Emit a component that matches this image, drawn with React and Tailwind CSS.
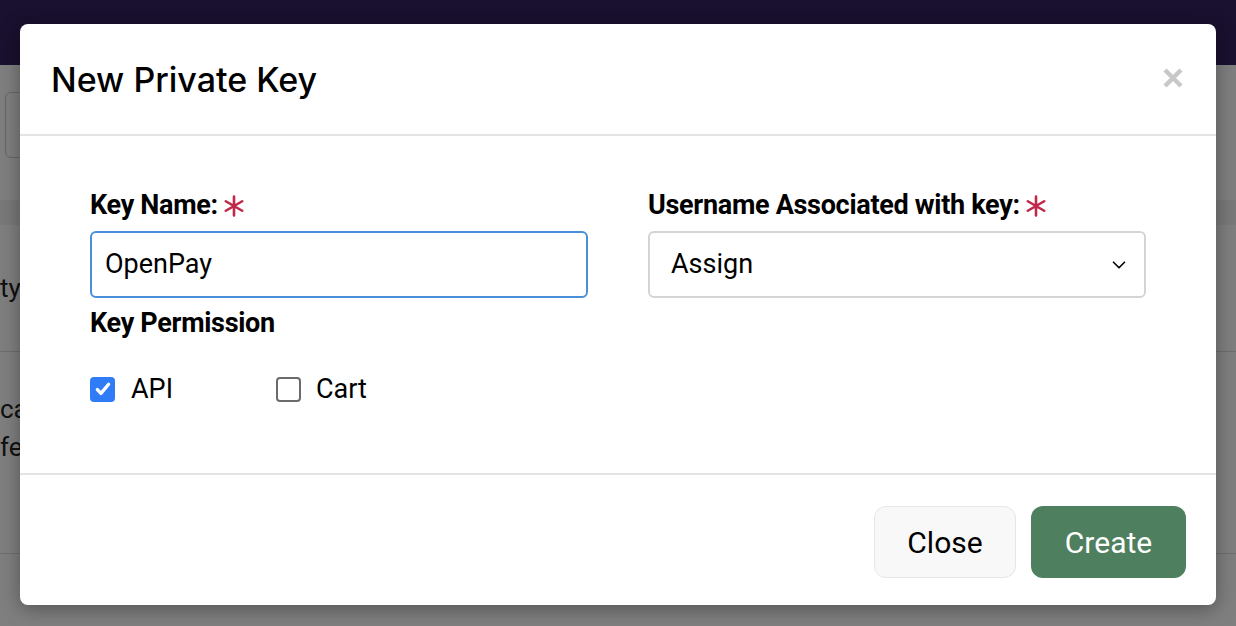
import { ChevronDown } from "lucide-react"

function Required() {
  return (
    <svg className="ml-[5px] mt-[2px]" width="22" height="22" viewBox="0 0 22 22" stroke="#c0284a" strokeWidth="2.6" strokeLinecap="round">
      <path d="M11 1.5v19M2.8 6.25l16.4 9.5M2.8 15.75l16.4-9.5" />
    </svg>
  )
}

export default function App() {
  return (
    <div className="relative w-[1236px] h-[626px] overflow-hidden bg-white" style={{ fontFamily: "Roboto, sans-serif" }}>
      {/* page behind the modal */}
      <div className="h-[65px] bg-[#35215f]" />
      <div className="px-[5px] pt-[27px]">
        <div className="w-[300px] h-[66px] rounded-md border border-[#ccc]" />
      </div>
      <div className="mt-[42px] h-[25px] bg-[#f2f2f2]" />
      <div className="h-[127px] border-b border-[#ddd] flex items-center text-[26px] text-[#222]">
        <span>ty</span>
      </div>
      <div className="h-[202px] border-b border-[#ddd] pt-[38px] text-[26px] leading-[38px] text-[#222]">
        <div>ca</div>
        <div>fe</div>
      </div>

      {/* backdrop */}
      <div className="absolute inset-0 bg-black/50" />

      {/* modal */}
      <div className="absolute left-[20px] top-[24px] w-[1196px] h-[581px] bg-white rounded-[8px] shadow-[0_4px_20px_rgba(0,0,0,0.35)] flex flex-col">
        <div className="h-[112px] flex items-center justify-between pl-[31px] pr-[33px] border-b-2 border-[#e4e4e4]">
          <h2 className="text-[34px] font-medium text-black" style={{ fontFamily: "Inter, sans-serif" }}>New Private Key</h2>
          <svg width="20" height="20" viewBox="0 0 20 20" stroke="#c8c8c8" strokeWidth="4.5" className="-mt-[2px]">
            <path d="M2 2l16 16M18 2L2 18" />
          </svg>
        </div>

        <div className="flex-1 px-[70px] pt-[52px] border-b-2 border-[#e4e4e4]">
          <div className="grid grid-cols-2 gap-x-[60px]">
            <div>
              <label className="flex items-center text-[27px] font-bold text-black leading-[34px] tracking-[-0.3px]">
                Key Name:<Required />
              </label>
              <div className="mt-[9px] h-[67px] rounded-[6px] border-2 border-[#4a8fd9] flex items-center px-[13px] text-[27px] text-black">
                OpenPay
              </div>
              <div className="mt-[8px] text-[27px] font-bold text-black leading-[34px] tracking-[-0.3px]">Key Permission</div>
              <div className="mt-[29px] flex items-center text-[27px] text-black">
                <div className="flex items-center w-[186px]">
                  <span className="w-[25px] h-[25px] rounded-[4px] bg-[#2f7cf6] flex items-center justify-center">
                    <svg width="18" height="18" viewBox="0 0 16 16" fill="none" stroke="white" strokeWidth="3" strokeLinecap="round" strokeLinejoin="round">
                      <path d="M3 8.5l3.2 3.4L13 3.8" />
                    </svg>
                  </span>
                  <span className="ml-[16px]">API</span>
                </div>
                <div className="flex items-center">
                  <span className="w-[25px] h-[25px] rounded-[4px] border-2 border-[#6b6b6b] bg-white" />
                  <span className="ml-[15px]">Cart</span>
                </div>
              </div>
            </div>
            <div>
              <label className="flex items-center text-[27px] font-bold text-black leading-[34px] tracking-[-0.3px]">
                Username Associated with key:<Required />
              </label>
              <div className="mt-[9px] h-[67px] rounded-[6px] border-2 border-[#d4d4d4] flex items-center justify-between pl-[21px] pr-[14px] text-[27px] text-black">
                <span>Assign</span>
                <ChevronDown className="w-[22px] h-[22px]" strokeWidth={1.8} />
              </div>
            </div>
          </div>
        </div>

        <div className="h-[130px] flex items-center justify-end gap-[15px] pr-[30px] pt-[4px]">
          <button className="w-[142px] h-[72px] rounded-[12px] bg-[#f8f8f8] border border-[#e6e6e6] text-[30px] text-black">Close</button>
          <button className="w-[155px] h-[72px] rounded-[12px] bg-[#4e7f5e] text-[30px] text-white">Create</button>
        </div>
      </div>
    </div>
  )
}
